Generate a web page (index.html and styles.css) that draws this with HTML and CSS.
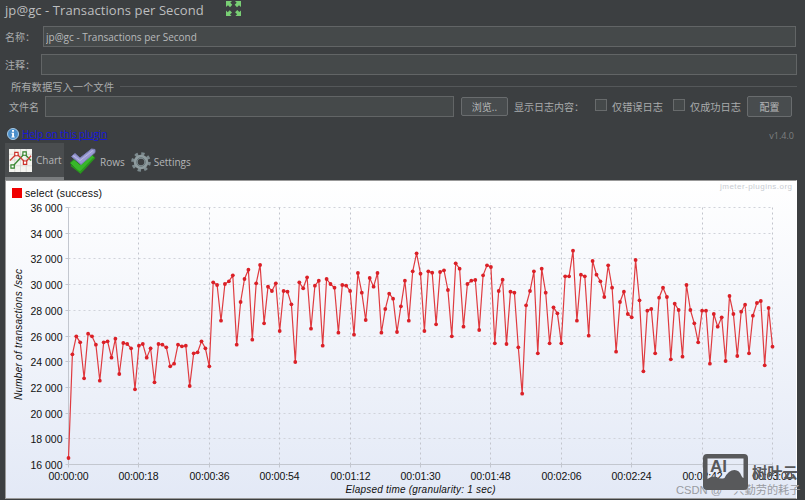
FILE: index.html
```html
<!DOCTYPE html>
<html lang="zh-CN">
<head>
    <meta charset="UTF-8">
    <title>jp@gc - Transactions per Second</title>
    <link rel="stylesheet" href="styles.css">
</head>
<body>
    <div class="panel">
        <div class="title-row">
            <h1>jp@gc - Transactions per Second</h1>
            <svg class="expand" width="15" height="15" viewBox="0 0 15 15" fill="#79cf74">
                <path d="M0 0h6L4.300 1.700l2 2L4 6.200l-2-2L0 6zM15 0v6l-2-1.800-2 2L8.700 3.700l2-2L9 0zM0 15V9.500l1.700 1.700 2-2L6 11.400l-2 2L5.600 15zM15 15H9.400l1.700-1.700-2-2 2.200-2.200 2 2L15 9.500z"/>
            </svg>
        </div>

        <div class="field-row name-row">
            <label for="name">名称：</label>
            <input id="name" type="text" value="jp@gc - Transactions per Second">
        </div>
        <div class="field-row comment-row">
            <label for="comment">注释：</label>
            <input id="comment" type="text">
        </div>

        <div class="group-title"><span>所有数据写入一个文件</span></div>
        <div class="file-row">
            <label class="file-label" for="filename">文件名</label>
            <input class="filename" id="filename" type="text">
            <button class="browse">浏览..</button>
            <span class="log-label">显示日志内容：</span>
            <span class="box"></span>
            <span class="check-label">仅错误日志</span>
            <span class="box"></span>
            <span class="check-label">仅成功日志</span>
            <button class="config">配置</button>
        </div>

        <div class="help-row">
            <svg width="12" height="12" viewBox="0 0 12 12">
                <circle cx="6" cy="6" r="5.500" fill="#4b8fca" stroke="#a9cbe6"/>
                <path d="M5 2h2v1.700H5zM4.500 4.700H7V8.500h.7v1H4.400v-1h.7V5.700h-.6z" fill="#fff"/>
            </svg>
            <a href="#">Help on this plugin</a>
            <span class="version">v1.4.0</span>
        </div>

        <div class="tabs">
            <div class="tab active">
                <svg width="23" height="23" viewBox="0 0 24 24" fill="none">
                    <path d="M0 0h24v24H0z" fill="#f4f4f0"/>
                    <path d="M0 5.500h24M0 11.500h24M0 17.500h24M6 0v24M12 0v24M18 0v24" stroke="#cfd0cc" stroke-width=".7"/>
                    <path d="M4 18L16 5l7 7" stroke="#3c8a35" stroke-width="1.400"/>
                    <path d="M1 12l7-7 9 9 6-7" stroke="#d04038" stroke-width="1.400"/>
                    <g fill="#fff" stroke-width="1.200">
                        <path d="M2 16.500h3.500V20H2zM14.500 3H18v3.500h-3.500z" stroke="#2f8128"/>
                        <path d="M6 3.500h3.500V7H6zM15 12.500h3.500V16H15z" stroke="#cc3028"/>
                    </g>
                </svg>
                <span>Chart</span>
            </div>
            <div class="tab rows">
                <svg width="27" height="27" viewBox="0 0 27 27" stroke-linejoin="round">
                    <path d="M1 15l4-3.500 6 5L22.500 6 26 10 11.500 25.500z" fill="#38b62a" stroke="#27851d"/>
                    <path d="M2 17.500l9 7L25 10" fill="none" stroke="#2b941f" stroke-width="1.500"/>
                    <path d="M2.500 8.500L6 5.500l5 4.500L22.500 1l3.500.5v3L12 16.500z" fill="#9a9bd2" stroke="#7b7eb8"/>
                    <path d="M4 7.500l7 5L24 2.500" fill="none" stroke="#b9b9e4"/>
                </svg>
                <span>Rows</span>
            </div>
            <div class="tab settings">
                <svg width="20" height="20" viewBox="0 0 20 20" fill="none">
                    <circle cx="10" cy="10" r="8.300" stroke="#7d8b8f" stroke-width="3" stroke-dasharray="3.260"/>
                    <circle cx="10" cy="10" r="5.300" stroke="#8e9b9e" stroke-width="4"/>
                    <circle cx="10" cy="10" r="4.300" stroke="#667579" stroke-width="1"/>
                </svg>
                <span>Settings</span>
            </div>
        </div>

        <div class="chart">
            <svg id="plot" width="790" height="317" viewBox="6 181 790 317">
                <defs>
                    <linearGradient id="sky" x1="0" y1="0" x2="0" y2="1">
                        <stop offset="0" stop-color="#ffffff"/>
                        <stop offset="1" stop-color="#e3e9f6"/>
                    </linearGradient>
                </defs>
                <rect x="6" y="181" width="790" height="317" fill="url(#sky)"/>
                <rect x="12" y="188" width="10" height="10" fill="#f00000"/>
                <text class="legend" x="25" y="197" textLength="77">select (success)</text>
                <text class="site" x="720" y="189" textLength="72">jmeter-plugins.org</text>
                <g id="grid"></g>
                <text class="axis-title" transform="translate(22 400) rotate(-90)" textLength="131">Number of transactions /sec</text>
                <text class="axis-title" x="345.500" y="493" textLength="150">Elapsed time (granularity: 1 sec)</text>
                <polyline id="line" class="line"/>
                <g id="dots" class="dots"></g>
            </svg>
        </div>
    </div>

    <div class="watermark">
        <span class="author">CSDN @一只勤劳的耗子</span>
        <svg class="logo" width="45" height="36" viewBox="0 0 45 36">
            <path fill="#58595b" fill-rule="evenodd" d="M4 0h37q4 0 4 4v28q0 4-4 4H4q-4 0-4-4V4q0-4 4-4zM4.500 4.500V25q5-3.500 9-2 4 2.500 8 1 4-8 10-8 5 0 7 6 1 2 2 2V4.500z"/>
        </svg>
        <span class="logo-text">AI</span>
        <span class="brand">树叶云</span>
    </div>

    <script>
        // vertical position of every one-second sample
        const samples = [
            458, 354.3, 336.3, 342.3, 378.3, 333.7, 336.3, 344.7, 380.7, 342.3, 341.3, 357.7,
            338.7, 374, 343, 344, 348.3, 389.3, 345.7, 344, 357.7, 348.3, 382.3, 344,
            344.7, 347.3, 366.3, 363.7, 344.7, 346.3, 345.7, 386, 353.3, 352.3, 341.3, 348.3,
            366.3, 282.3, 285, 320.7, 284, 281.3, 275.3, 344.7, 302, 279, 269.7, 339.7,
            283.3, 265, 323.3, 286.7, 291, 283.3, 331, 291, 291.7, 304.3, 362, 282.3,
            288.3, 277.3, 328.7, 285.7, 280.7, 345.7, 279, 284, 287.7, 332.7, 285, 285.7,
            291, 334.7, 273, 292.7, 320, 278, 286.7, 273, 332.7, 309, 293.7, 298.7,
            332, 306.3, 280.7, 320.7, 271.3, 253.3, 273.7, 331, 271.3, 272.7, 324.3, 272,
            270.3, 290, 336.3, 263.3, 268.7, 326.7, 284, 280.7, 280, 330, 275.3, 265.3,
            267, 343.3, 291, 279.7, 344, 291.7, 292.7, 347.3, 393.7, 305.3, 291, 271.3,
            353.3, 268.7, 292.7, 343.3, 307.3, 313.3, 343.3, 276.3, 276.3, 250.7, 320.7, 274.7,
            276.3, 335.7, 261, 274.7, 281.3, 297, 265.3, 287.7, 351.7, 302, 291.7, 314,
            317.3, 260, 300.3, 371.3, 310.7, 309, 353.3, 297.7, 287.7, 297, 359.3, 303.7,
            310, 356.7, 285, 310, 323.3, 342.3, 310.7, 310.7, 363.7, 314, 326.7, 317.3,
            361, 296, 314, 356, 311.7, 304.7, 353.3, 315.7, 303, 301, 365.3, 308, 346.7
        ];
        const left = 68.5, right = 772.5, top_ = 207.5, bottom = 464.5;
        let grid = '';

        for (let i = 0; i <= 10; i++) {
            const y = Math.floor(top_ + (bottom - top_) * i / 10) + 0.5;
            const cls = i === 10 ? 'axis' : 'dash';
            grid += `<line class="${cls}" x1="${left}" y1="${y}" x2="${right}" y2="${y}"/>`;
            grid += `<line class="axis" x1="${left - 3}" y1="${y}" x2="${left}" y2="${y}"/>`;
            grid += `<text class="tick" x="30.500" y="${y + 4.5}" textLength="32">${36 - i * 2} 000</text>`;
        }
        for (let i = 0; i <= 10; i++) {
            const x = Math.floor(left + (right - left) * i / 10) + 0.5;
            const s = i * 18;
            const label = `00:0${Math.floor(s / 60)}:${String(s % 60).padStart(2, '0')}`;
            const cls = i === 0 ? 'axis' : 'dash vertical';
            grid += `<line class="${cls}" x1="${x}" y1="${top_}" x2="${x}" y2="${bottom}"/>`;
            grid += `<line class="axis" x1="${x}" y1="${bottom}" x2="${x}" y2="${bottom + 3}"/>`;
            grid += `<text class="tick" x="${x - 20}" y="479.500" textLength="40">${label}</text>`;
        }
        document.getElementById('grid').innerHTML = grid;

        const points = samples.map((y, i) => [(left + i * (right - left) / 180).toFixed(1), y]);
        document.getElementById('line').setAttribute('points', points.map(p => p.join(',')).join(' '));
        document.getElementById('dots').innerHTML = points.map(p => `<circle cx="${p[0]}" cy="${p[1]}" r="1.900"/>`).join('');
    </script>
</body>
</html>
```
FILE: styles.css
```css
* {
    box-sizing: border-box;
}

body {
    position: relative;
    width: 805px;
    height: 500px;
    margin: 0;
    overflow: hidden;
    background: #3c3f41;
    color: #a9abac;
    font-family: "Open Sans", "Noto Sans CJK SC", sans-serif;
    font-size: 10px;
}

.panel {
    display: flex;
    flex-direction: column;
    padding-left: 5px;
}

.title-row {
    display: flex;
    align-items: flex-start;
    height: 26px;
}

h1 {
    width: 221px;
    margin: 0;
    font-size: 13px;
    font-weight: normal;
    line-height: 20px;
    letter-spacing: 0.09px;
    white-space: nowrap;
    color: #bcbebf;
}

.expand {
    margin-top: 1px;
}

input {
    height: 21px;
    padding: 0 2px;
    background: #45494a;
    border: 1px solid #626566;
    color: #b8babb;
    font: 10px "Open Sans", sans-serif;
    outline: none;
}

.field-row {
    display: flex;
    align-items: center;
    height: 21px;
}

.field-row label {
    flex: none;
    width: 38px;
    white-space: nowrap;
}

.field-row input {
    flex: 1;
}

.name-row {
    margin-right: 9px;
}

.comment-row {
    margin: 7px 8px 0 0;
}

.comment-row label {
    width: 36px;
}

.group-title {
    display: flex;
    align-items: center;
    gap: 6px;
    height: 14px;
    margin: 4px 8px 0 0;
    padding-left: 6px;
    font-size: 10.3px;
    white-space: nowrap;
}

.group-title::after {
    content: "";
    flex: 1;
    height: 1px;
    background: #55585a;
}

.file-row {
    display: flex;
    align-items: center;
    height: 21px;
    margin-top: 3px;
    white-space: nowrap;
}

.file-label {
    flex: none;
    width: 40px;
    padding-left: 4px;
}

.filename {
    flex: none;
    width: 409px;
    margin-right: 7px;
}

button {
    flex: none;
    padding: 0;
    background: #484c4e;
    border: 1px solid #696c6e;
    border-radius: 2px;
    color: #b4b6b7;
    font: 10px "Open Sans", "Noto Sans CJK SC", sans-serif;
}

.browse {
    width: 47px;
    height: 19px;
}

.log-label {
    flex: none;
    width: 87px;
    padding-left: 6px;
}

.box {
    flex: none;
    width: 12px;
    height: 12px;
    margin-top: -3px;
    background: #45494a;
    border: 1px solid #686b6c;
}

.check-label {
    flex: none;
    width: 66px;
    padding-left: 5px;
    font-size: 10.2px;
}

.config {
    width: 45px;
    height: 21px;
    margin-left: -4px;
}

.help-row {
    display: flex;
    align-items: center;
    height: 16px;
    margin: 9px 11px 0 0;
    padding-left: 2px;
}

.help-row a {
    margin: -1px 0 0 3px;
    color: #1616dc;
    font-size: 10px;
    line-height: 14px;
    letter-spacing: -0.12px;
}

.version {
    margin: 3px 0 0 auto;
    color: #7c7f80;
    font-size: 9px;
}

.tabs {
    display: flex;
    height: 37px;
    margin-top: 1px;
}

.tab {
    display: flex;
    align-items: center;
    gap: 4px;
    height: 37px;
    color: #b4b6b7;
}

.tab.active {
    width: 59px;
    padding-left: 4px;
    background: #4a4d4f;
    border-bottom: 3px solid #797c7e;
}

.rows {
    padding-left: 5px;
}

.settings {
    padding-left: 6px;
    gap: 3px;
}

.chart {
    width: 792px;
    height: 319px;
    border: 1px solid #999;
    border-right-color: #fff;
    background: #fff;
}

.chart svg {
    display: block;
}

.chart text {
    font-family: "Liberation Sans", sans-serif;
    font-size: 10.5px;
    fill: #111;
}

.chart .axis-title {
    font-style: italic;
    font-size: 10px;
}

.chart .site {
    font-size: 8px;
    fill: #c8ccd2;
}

.axis {
    stroke: #c3c7cf;
}

.dash {
    stroke: #d0d3da;
    stroke-dasharray: 2 3;
}

.vertical {
    stroke: #c2c5cd;
}

.line {
    fill: none;
    stroke: #df3b40;
    stroke-width: 1.2;
}

.dots {
    fill: #db2027;
}

.watermark {
    position: absolute;
    left: 675px;
    top: 453px;
    width: 130px;
    height: 47px;
    white-space: nowrap;
}

.watermark > * {
    position: absolute;
}

.author {
    left: 1px;
    top: 29px;
    color: #999ba1;
    font: 11.2px/16px "Liberation Sans", "Noto Sans CJK SC", sans-serif;
}

.logo {
    left: 28px;
    top: 1px;
}

.logo-text {
    left: 35px;
    top: 4px;
    color: #58595b;
    font: bold 17px/20px "Liberation Sans", sans-serif;
}

.brand {
    left: 77px;
    top: 8px;
    color: #58595b;
    font: bold 15.2px/20px "Noto Sans CJK SC", sans-serif;
}
```
